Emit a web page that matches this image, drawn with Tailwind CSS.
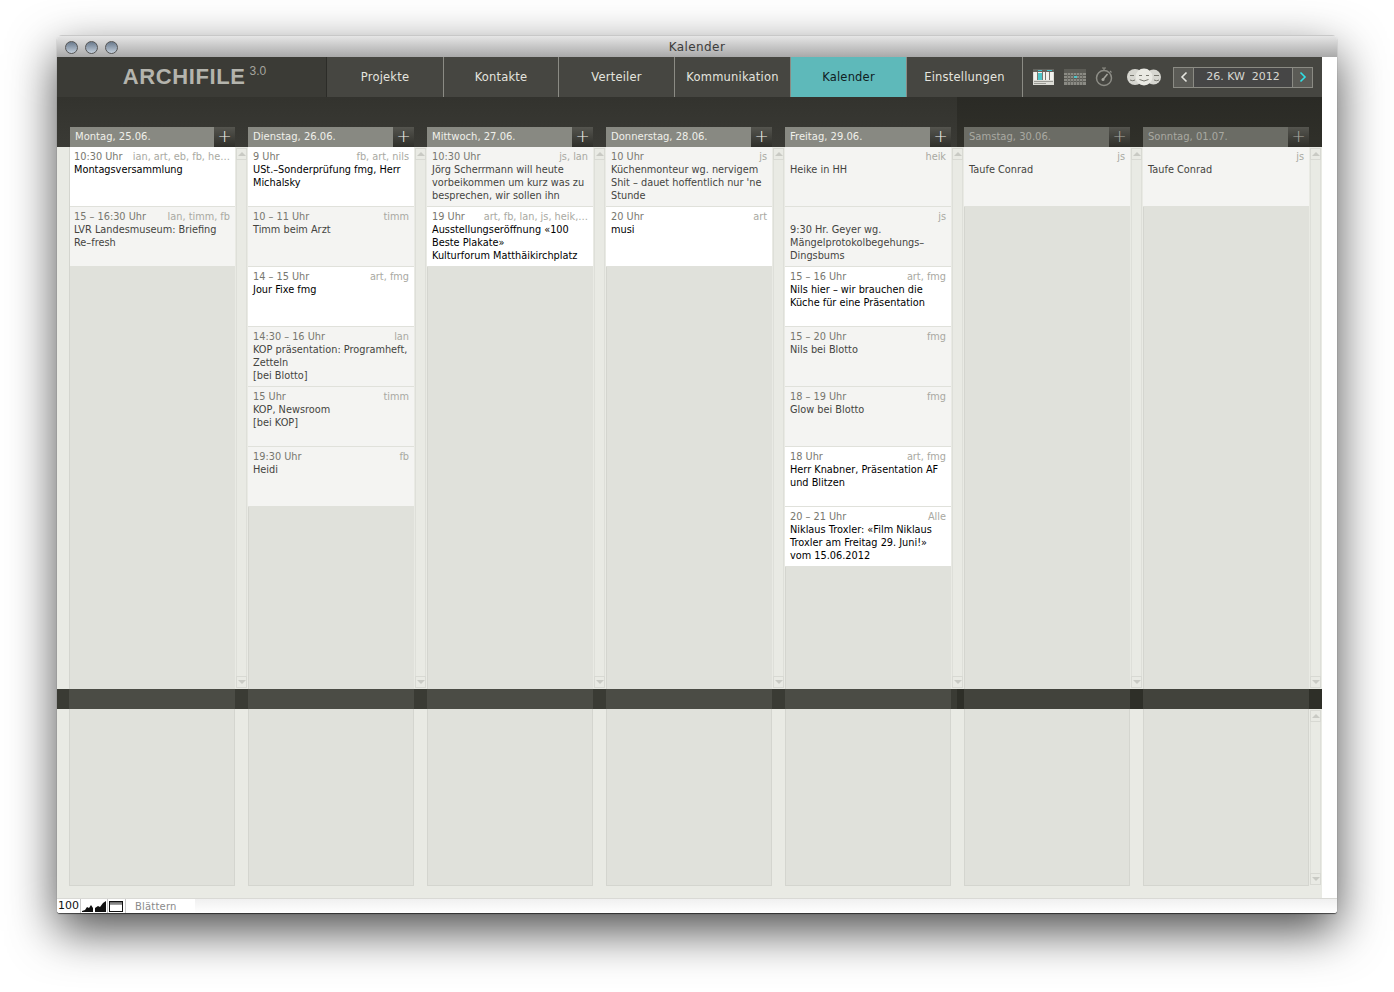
<!DOCTYPE html>
<html lang="de">
<head>
<meta charset="UTF-8">
<title>Kalender</title>
<script src="https://cdn.jsdelivr.net/npm/@tailwindcss/browser@4"></script>
</head>
<body class="bg-white h-[992px] w-[1394px] overflow-hidden font-['DejaVu_Sans',sans-serif]">

<!-- Window -->
<div class="ml-[57px] mt-[35px] w-[1280px] h-[878px] flex flex-col rounded-t-[5px] rounded-b-[3px] bg-white shadow-[0_18px_48px_rgba(0,0,0,0.7),0_1px_1px_rgba(0,0,0,0.6)] overflow-hidden">

    <!-- Title bar -->
    <div class="h-[22px] shrink-0 relative flex items-center justify-center bg-gradient-to-b from-[#e6e6e6] to-[#a9a9a9] border-t border-[#c8c8c8] text-[12px] text-[#3c3c3c] tracking-[0.4px]">
        Kalender
        <div class="absolute left-[8px] top-[5px] flex gap-[7px]">
            <span class="w-[13px] h-[13px] rounded-full border border-[#555] bg-gradient-to-b from-[#6b7b8e] to-[#c3cfdb]"></span>
            <span class="w-[13px] h-[13px] rounded-full border border-[#555] bg-gradient-to-b from-[#6b7b8e] to-[#c3cfdb]"></span>
            <span class="w-[13px] h-[13px] rounded-full border border-[#555] bg-gradient-to-b from-[#6b7b8e] to-[#c3cfdb]"></span>
        </div>
    </div>

    <!-- Navigation -->
    <div class="h-[40px] shrink-0 flex w-[1265px] bg-[#464641] text-[11.5px] text-[#e4e4df] tracking-[0.2px]">
        <div class="w-[270px] bg-[#3b3b36] border-r border-[#2c2c28] flex items-center justify-center pl-[6px] pb-[2px]">
            <span class="font-['Liberation_Sans',sans-serif] font-bold text-[22px] text-[#b4b4ad] tracking-[0.6px]">ARCHIFILE</span>
            <span class="font-['Liberation_Sans',sans-serif] text-[12px] text-[#a5a59e] ml-[4px] mb-[10px] tracking-normal">3.0</span>
        </div>
        <a class="w-[117px] pt-[2px] border-r border-[#8b8b84] flex items-center justify-center">Projekte</a>
        <a class="w-[115px] pt-[2px] border-r border-[#8b8b84] flex items-center justify-center">Kontakte</a>
        <a class="w-[116px] pt-[2px] border-r border-[#8b8b84] flex items-center justify-center">Verteiler</a>
        <a class="w-[116px] pt-[2px] border-r border-[#8b8b84] flex items-center justify-center">Kommunikation</a>
        <a class="w-[116px] pt-[2px] bg-[#5eb9ba] border-r border-[#8b8b84] text-[#10201f] flex items-center justify-center">Kalender</a>
        <a class="w-[116px] pt-[2px] border-r border-[#8b8b84] flex items-center justify-center">Einstellungen</a>

        <!-- Tool icons -->
        <div class="flex-1 flex items-center pl-[10px]">
            <svg width="21" height="16" viewBox="0 0 21 16" class="shrink-0">
                <rect width="21" height="16" fill="#dcdcd6"/>
                <rect x="0" y="0" width="21" height="3" fill="#63635e"/>
                <rect x="5" y="1" width="4" height="1" fill="#3fc0c6"/>
                <rect x="14" y="1" width="5" height="1" fill="#3fc0c6"/>
                <rect x="1" y="3" width="19" height="8" fill="#f2f2ee"/>
                <path d="M4.500 3v8M9.500 3v8M12.500 3v8M16.500 3v8" stroke="#77776f" stroke-width="1"/>
                <rect x="5" y="4" width="4" height="7" fill="#4ec6ca"/>
                <path d="M1 12.500h19M1 14.500h12" stroke="#9a9a94" stroke-width="1"/>
            </svg>
            <svg width="22" height="16" viewBox="0 0 22 16" class="ml-[10px] shrink-0">
                <rect width="22" height="16" fill="#5c5c56"/>
                <rect y="4" width="22" height="12" fill="#8b8b84"/>
                <path d="M0 6.500h22M0 9.500h22M0 12.500h22" stroke="#5c5c56" stroke-width="1"/>
                <path d="M3.500 4v12M6.500 4v12M9.500 4v12M12.500 4v12M15.500 4v12M18.500 4v12" stroke="#6b6b65" stroke-width="1"/>
                <rect x="10" y="7" width="3" height="2" fill="#4ec6ca"/>
            </svg>
            <svg width="18" height="20" viewBox="0 0 18 20" class="ml-[9px] shrink-0" fill="none">
                <circle cx="9" cy="11" r="7.500" stroke="#8d8d86" stroke-width="1.500"/>
                <path d="M7 1h4M9 1v2M15 4l1.500 1.500" stroke="#8d8d86" stroke-width="1.200"/>
                <path d="M7.500 13L12.500 7" stroke="#a5a59e" stroke-width="1.500"/>
                <circle cx="8" cy="12.500" r="1.500" fill="#a5a59e"/>
            </svg>
            <svg width="34" height="18" viewBox="0 0 34 18" class="ml-[14px] shrink-0">
                <circle cx="8" cy="9" r="8" fill="#d6d6d0"/>
                <circle cx="26.500" cy="9" r="7.500" fill="#d6d6d0"/>
                <path d="M3 7.500h4M3 12q3 1.500 5 0M27 7.500h5M27 12q3 1.500 5 0" stroke="#77776f" stroke-width="1" fill="none"/>
                <circle cx="17" cy="9" r="8.500" fill="#e9e9e3"/>
                <path d="M12 7.500h3M19 7.500h3M12.500 11.500q4.500 3 9 0" stroke="#77776f" stroke-width="1" fill="none"/>
            </svg>
            <!-- Week switcher -->
            <div class="ml-[12px] w-[140px] h-[21px] shrink-0 flex border border-[#8b8b84] text-[11px] text-[#d8d8d2] tracking-normal bg-[#464646]">
                <span class="w-[20px] border-r border-[#8b8b84] bg-[#5b5b56] flex items-center justify-center">
                    <svg width="8" height="12" viewBox="0 0 8 12" fill="none"><path d="M6.500 1.500L2 6l4.500 4.500" stroke="#e6e6e0" stroke-width="1.600"/></svg>
                </span>
                <span class="flex-1 flex items-center justify-center pt-[1px]">26. KW&nbsp; 2012</span>
                <span class="w-[20px] border-l border-[#8b8b84] bg-[#5b5b56] flex items-center justify-center">
                    <svg width="8" height="12" viewBox="0 0 8 12" fill="none"><path d="M1.500 1.500L6 6l-4.500 4.500" stroke="#2fe0e6" stroke-width="1.600"/></svg>
                </span>
            </div>
        </div>
    </div>

    <!-- Calendar area: rows are filled by the script below -->
    <div class="flex-1 w-[1265px] flex flex-col bg-[#e9eae4]">
        <div class="h-[50px] relative bg-gradient-to-b from-[#33332e] to-[#3a3a35]">
            <div class="absolute top-0 bottom-0 left-[900px] right-0 bg-gradient-to-b from-[#2a2a25] to-[#30302a]"></div>
            <div id="headerRow" class="relative h-full flex pl-[12px]"></div>
        </div>
        <div id="eventRow" class="h-[542px] flex pl-[12px]"></div>
        <div class="h-[20px] relative bg-[#3a3b34]">
            <div class="absolute top-0 bottom-0 left-[900px] right-0 bg-[#2e2f28]"></div>
            <div id="bandRow" class="relative h-full flex pl-[12px]"></div>
        </div>
        <div id="lowerRow" class="h-[177px] flex pl-[12px]"></div>
    </div>

    <!-- Status bar -->
    <div class="h-[15px] shrink-0 flex border-t border-[#d9d9d5] bg-gradient-to-b from-[#f0f0f0] to-white text-[10px] text-[#111]">
        <div class="w-[138px] bg-white flex items-center">
            <span class="w-[24px] h-full border-r border-[#c9c9c9] flex items-center justify-center text-[11px]">100</span>
            <div class="w-[26px] h-full flex items-end pb-[1px] pl-[1px]">
                <svg width="11" height="7" viewBox="0 0 11 7"><path d="M0 7V6l3-1 2-3 2 1 2-3 2 3v4z" fill="#111"/></svg>
                <svg width="11" height="11" viewBox="0 0 11 11" class="ml-[2px]"><path d="M0 11V7l3-2 2 1 3-4 3-2v11z" fill="#111"/></svg>
            </div>
            <span class="w-[19px] h-full border-x border-[#c9c9c9] flex items-center pl-[1px]">
                <span class="block w-[14px] h-[11px] border border-[#111] bg-white">
                    <span class="block h-[3px] bg-gradient-to-b from-[#666] to-[#aaa]"></span>
                </span>
            </span>
            <span class="ml-[9px] text-[#8a8a8a] tracking-[0.2px]">Blättern</span>
        </div>
    </div>
</div>

<script>
    const days = [
        { name: "Montag, 25.06.", events: [
            { time: "10:30 Uhr", who: "ian, art, eb, fb, he…", text: "Montagsversammlung", white: true },
            { time: "15 – 16:30 Uhr", who: "lan, timm, fb", text: "LVR Landesmuseum: Briefing<br>Re–fresh" }
        ]},
        { name: "Dienstag, 26.06.", events: [
            { time: "9 Uhr", who: "fb, art, nils", text: "USt.–Sonderprüfung fmg, Herr<br>Michalsky", white: true },
            { time: "10 – 11 Uhr", who: "timm", text: "Timm beim Arzt" },
            { time: "14 – 15 Uhr", who: "art, fmg", text: "Jour Fixe fmg", white: true },
            { time: "14:30 – 16 Uhr", who: "lan", text: "KOP präsentation: Programheft,<br>Zetteln<br>[bei Blotto]" },
            { time: "15 Uhr", who: "timm", text: "KOP, Newsroom<br>[bei KOP]" },
            { time: "19:30 Uhr", who: "fb", text: "Heidi" }
        ]},
        { name: "Mittwoch, 27.06.", events: [
            { time: "10:30 Uhr", who: "js, lan", text: "Jörg Scherrmann will heute<br>vorbeikommen um kurz was zu<br>besprechen, wir sollen ihn" },
            { time: "19 Uhr", who: "art, fb, lan, js, heik,…", text: "Ausstellungseröffnung «100<br>Beste Plakate»<br>Kulturforum Matthäikirchplatz", white: true }
        ]},
        { name: "Donnerstag, 28.06.", events: [
            { time: "10 Uhr", who: "js", text: "Küchenmonteur wg. nervigem<br>Shit – dauet hoffentlich nur 'ne<br>Stunde" },
            { time: "20 Uhr", who: "art", text: "musi", white: true }
        ]},
        { name: "Freitag, 29.06.", events: [
            { time: "", who: "heik", text: "Heike in HH" },
            { time: "", who: "js", text: "9:30 Hr. Geyer wg.<br>Mängelprotokolbegehungs–<br>Dingsbums" },
            { time: "15 – 16 Uhr", who: "art, fmg", text: "Nils hier – wir brauchen die<br>Küche für eine Präsentation", white: true },
            { time: "15 – 20 Uhr", who: "fmg", text: "Nils bei Blotto" },
            { time: "18 – 19 Uhr", who: "fmg", text: "Glow bei Blotto" },
            { time: "18 Uhr", who: "art, fmg", text: "Herr Knabner, Präsentation AF<br>und Blitzen", white: true },
            { time: "20 – 21 Uhr", who: "Alle", text: "Niklaus Troxler: «Film Niklaus<br>Troxler am Freitag 29. Juni!»<br>vom 15.06.2012", white: true }
        ]},
        { name: "Samstag, 30.06.", weekend: true, events: [
            { time: "", who: "js", text: "Taufe Conrad" }
        ]},
        { name: "Sonntag, 01.07.", weekend: true, events: [
            { time: "", who: "js", text: "Taufe Conrad" }
        ]}
    ];

    const upArrow = `<span class="block w-0 h-0 border-x-[4px] border-x-transparent border-b-[4px] border-b-[#c9cac4]"></span>`;
    const downArrow = `<span class="block w-0 h-0 border-x-[4px] border-x-transparent border-t-[4px] border-t-[#c9cac4]"></span>`;

    function scrollbar(withArrows) {
        if (!withArrows) return `<div class="w-[13px] shrink-0"></div>`;
        return `<div class="w-[13px] shrink-0 px-[1px] py-[1px]">
            <div class="h-full flex flex-col justify-between border-x border-[#dedfd9]">
                <div class="h-[12px] border border-[#d8d9d3] -mx-[1px] flex items-center justify-center">${upArrow}</div>
                <div class="h-[12px] border border-[#d8d9d3] -mx-[1px] flex items-center justify-center">${downArrow}</div>
            </div>
        </div>`;
    }

    function eventCard(ev, first) {
        const bg = ev.white ? "bg-white text-black" : "bg-[#f4f4f2] text-[#44443f]";
        const inset = first ? "pl-[4px]" : "pl-[5px] -ml-[1px]";
        return `<div class="h-[60px] overflow-hidden ${inset} pr-[4px] pt-[3px] border-b border-[#e0e1db] text-[9.75px] leading-[13px] ${bg}">
            <div class="flex justify-between whitespace-nowrap">
                <span class="text-[#77776f]">${ev.time}</span>
                <span class="text-[#a9a9a2] pr-[1px]">${ev.who}</span>
            </div>
            <div class="whitespace-nowrap">${ev.text}</div>
        </div>`;
    }

    const headerRow = document.getElementById("headerRow");
    const eventRow = document.getElementById("eventRow");
    const bandRow = document.getElementById("bandRow");
    const lowerRow = document.getElementById("lowerRow");

    days.forEach((day, i) => {
        const last = i === days.length - 1;
        const label = day.weekend ? "bg-[#6b6c65] text-[#a9a9a2]" : "bg-[#888982] text-[#f0f0ea]";
        const plus = day.weekend ? "text-[#a9a9a2]" : "text-[#f0f0ea]";
        headerRow.innerHTML += `<div class="w-[179px] shrink-0 flex items-end">
            <div class="h-[20px] flex ${i === 0 ? "ml-[1px] w-[165px]" : "w-[166px]"} ${label}">
                <span class="flex-1 pl-[5px] text-[10px] leading-[19px]">${day.name}</span>
                <span class="w-[21px] bg-gradient-to-b from-[#55554f] to-[#2f2f2a] flex items-center justify-center text-[17px] font-light ${plus}">+</span>
            </div>
        </div>`;

        eventRow.innerHTML += `<div class="w-[166px] shrink-0 border-l border-[#d4d5cf] bg-[#e0e1db]">
            ${day.events.map(ev => eventCard(ev, i === 0)).join("")}
        </div>${scrollbar(true)}`;

        bandRow.innerHTML += `<div class="w-[166px] shrink-0 ${day.weekend ? "bg-[#42433c]" : "bg-[#4b4c45]"}"></div><div class="w-[13px] shrink-0"></div>`;

        lowerRow.innerHTML += `<div class="w-[166px] h-[177px] shrink-0 border-x border-b border-[#d4d5cf] bg-[#e0e1db]"></div>${scrollbar(last)}`;
    });
</script>
</body>
</html>
